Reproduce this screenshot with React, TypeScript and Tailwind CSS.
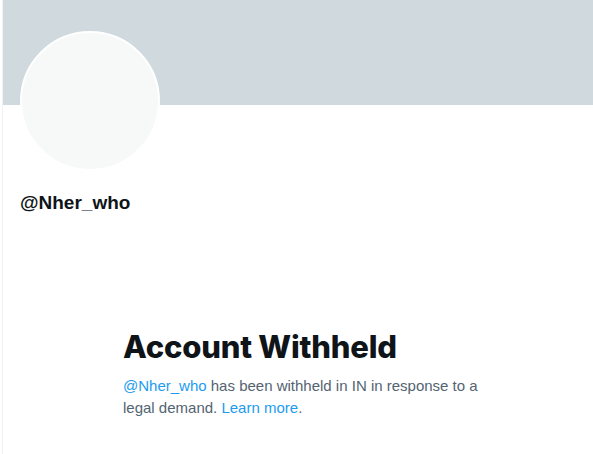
import React from 'react';

export default function App() {
  return (
    <div className="w-[593px] h-[454px] bg-white overflow-hidden font-['Liberation_Sans',sans-serif]">
      <div className="h-full ml-[2px] border-l border-[#eff3f4]">
        <div className="h-[105px] bg-[#cfd9de]" />
        <div className="pl-[17px] -mt-[74px]">
          <div className="w-[140px] h-[140px] rounded-full bg-[#f7f9f9] border-2 border-white" />
          <div className="mt-[20px] text-[19px] leading-[24px] font-bold text-[#0f1419]">
            @Nher_who
          </div>
        </div>
        <div className="pl-[120px] pt-[114px]">
          <h1 className="font-['Inter',sans-serif] text-[31px] leading-[36px] font-extrabold text-[#0f1419] tracking-[-0.2px]">
            Account Withheld
          </h1>
          <p className="mt-[10px] w-[370px] text-[15px] leading-[22px] text-[#536471]">
            <span className="text-[#1d9bf0]">@Nher_who</span> has been withheld in IN in response to a legal demand.{' '}
            <span className="text-[#1d9bf0]">Learn more</span>.
          </p>
        </div>
      </div>
    </div>
  );
}
